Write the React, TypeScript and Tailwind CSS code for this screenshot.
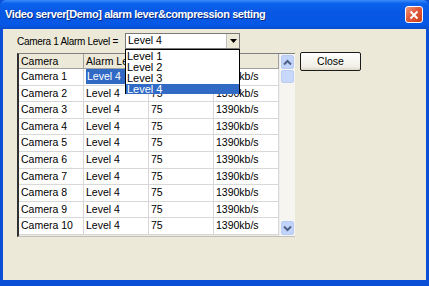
import React from "react";

const rows = Array.from({ length: 10 }, (_, i) => `Camera ${i + 1}`);

function Chevron({ up }: { up?: boolean }) {
  return (
    <svg width="9" height="7" viewBox="0 0 9 7">
      <path
        d={up ? "M1 5.5 L4.5 2 L8 5.5" : "M1 1.5 L4.5 5 L8 1.5"}
        fill="none"
        stroke="#4d6185"
        strokeWidth="2"
      />
    </svg>
  );
}

export default function App() {
  const font = { fontFamily: '"Liberation Sans", Arial, sans-serif' };
  return (
    <div className="w-[429px] h-[286px] flex flex-col overflow-hidden bg-[#0a4fd6]" style={font}>
      {/* title bar */}
      <div className="h-[29px] shrink-0 flex items-center justify-between pl-[5px] pr-[6px] bg-[linear-gradient(to_bottom,#3b8dfb_0%,#0b62ec_12%,#0757e3_45%,#0558e6_85%,#0a4ccc_100%)] rounded-t-[6px]">
        <span className="text-white font-bold text-[11px] tracking-[-0.4px] whitespace-nowrap [text-shadow:1px_1px_0_#0a2a80]">
          Video server[Demo] alarm lever&amp;compression setting
        </span>
        <div className="w-[18px] h-[17px] rounded-[3px] border border-white bg-[linear-gradient(135deg,#f09a7c_0%,#e2583a_45%,#c9401c_100%)] flex items-center justify-center">
          <svg width="10" height="10" viewBox="0 0 10 10">
            <path d="M1.5 1.5 L8.5 8.5 M8.5 1.5 L1.5 8.5" stroke="white" strokeWidth="2" />
          </svg>
        </div>
      </div>
      {/* body */}
      <div className="flex-1 flex mx-[3px] mb-[6px] bg-[#ece9d8] pl-[14px] pt-[4px]">
        <div className="relative flex flex-col text-[10.5px] text-black">
          <div className="flex items-center h-[16px]">
            <span className="w-[108px] whitespace-nowrap text-[10px] tracking-[-0.3px]">Camera 1 Alarm Level =</span>
            <div className="w-[115px] h-[16px] bg-white border border-[#7a7a7a] flex items-center justify-between pl-[2px]">
              <span>Level 4</span>
              <div className="w-[13px] h-[14px] bg-[#ece9d8] border-l border-[#c0c0c0] flex items-center justify-center">
                <svg width="7" height="4" viewBox="0 0 7 4">
                  <path d="M0 0 H7 L3.5 4 Z" fill="black" />
                </svg>
              </div>
            </div>
          </div>
          <div className="flex mt-[4px] gap-[5px]">
            {/* grid */}
            <div className="flex border-l-2 border-t border-b border-l-[#303030] border-t-[#808080] border-b-[#c0c0c0] h-[184px] overflow-hidden">
              <div className="w-[260px] flex flex-col">
                <div className="flex h-[15px] bg-[#ece9d8] border-b border-[#a0a0a0]">
                  {["Camera", "Alarm Level", "Quality", "Rate"].map((h) => (
                    <div
                      key={h}
                      className="w-[65px] border-r border-[#a0a0a0] pl-[2px] leading-[14px] overflow-hidden whitespace-nowrap"
                    >
                      {h}
                    </div>
                  ))}
                </div>
                {rows.map((r, idx) => (
                  <div key={r} className="flex h-[16.6px] shrink-0 bg-white border-b border-[#d8d8d8]">
                    <div className="w-[65px] border-r border-[#d8d8d8] pl-[2px] leading-[15px]">{r}</div>
                    <div className="w-[65px] border-r border-[#d8d8d8] pl-[2px] leading-[15px]">
                      {idx === 0 ? (
                        <span className="bg-[#316ac5] text-white inline-block w-[42px] pl-[1px]">Level 4</span>
                      ) : (
                        "Level 4"
                      )}
                    </div>
                    <div className="w-[65px] border-r border-[#d8d8d8] pl-[2px] leading-[15px]">75</div>
                    <div className="w-[65px] border-r border-[#d8d8d8] pl-[2px] leading-[15px]">1390kb/s</div>
                  </div>
                ))}
              </div>
              {/* scrollbar */}
              <div className="w-[16px] bg-[#f6f5f0] flex flex-col border-l border-[#eeeeee]">
                <div className="h-[14px] mx-[1px] mt-[1px] rounded-[2px] bg-[#c3d4fc] border border-[#b8cbf5] flex items-center justify-center">
                  <Chevron up />
                </div>
                <div className="h-[13px] mx-[1px] mt-[1px] rounded-[2px] bg-[#c8d8fb] border border-[#bccdf5]" />
                <div className="flex-1" />
                <div className="h-[14px] mx-[1px] mb-[1px] rounded-[2px] bg-[#c3d4fc] border border-[#b8cbf5] flex items-center justify-center">
                  <Chevron />
                </div>
              </div>
            </div>
            <div className="w-[61px] h-[19px] -mt-[1px] border border-[#1c1c1c] rounded-[2px] bg-[linear-gradient(to_bottom,#ffffff,#f1efe6_80%,#dcd8c8)] flex items-center justify-center">
              Close
            </div>
          </div>
          {/* dropdown list */}
          <div className="absolute left-[108px] top-[16px] w-[115px] h-[45px] bg-white border border-black flex flex-col leading-[11px] pt-[1px] text-[11px]">
            <div className="pl-[1px] h-[11px]">Level 1</div>
            <div className="pl-[1px] h-[11px]">Level 2</div>
            <div className="pl-[1px] h-[11px]">Level 3</div>
            <div className="pl-[1px] h-[10px] bg-[#316ac5] text-white">Level 4</div>
          </div>
        </div>
      </div>
    </div>
  );
}
